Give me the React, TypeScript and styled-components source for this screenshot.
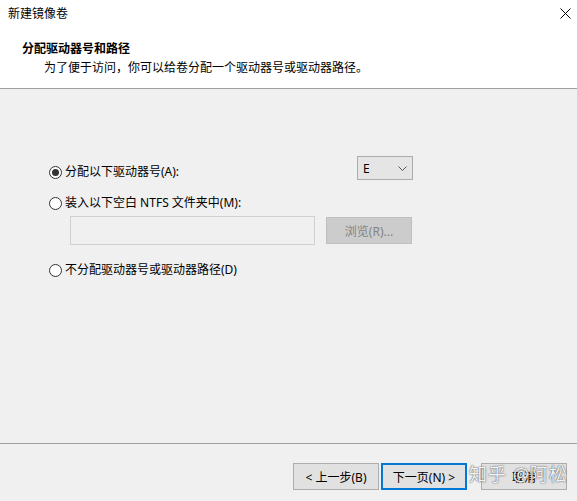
import styled, { createGlobalStyle } from "styled-components";

const GlobalStyle = createGlobalStyle`
  html, body {
    margin: 0;
    padding: 0;
    background: #ffffff;
  }
  body {
    font-family: "Noto Sans", "Noto Sans CJK SC", sans-serif;
    font-size: 12px;
    color: #000;
  }
`;

type DriveOption = { id: string; label: string; checked?: boolean };

const options: DriveOption[] = [
  { id: "letter", label: "分配以下驱动器号(A):", checked: true },
  { id: "folder", label: "装入以下空白 NTFS 文件夹中(M):" },
  { id: "none", label: "不分配驱动器号或驱动器路径(D)" },
];

export default function App() {
  return (
    <>
      <GlobalStyle />
      <Dialog>
        <TitleBar>
          <span>新建镜像卷</span>
          <CloseButton aria-label="关闭">
            <svg width="11" height="11" viewBox="0 0 11 11">
              <path d="M0.5 0.5 L10.5 10.5 M10.5 0.5 L0.5 10.5" stroke="#000" strokeWidth="1" fill="none" />
            </svg>
          </CloseButton>
        </TitleBar>

        <Header>
          <HeaderTitle>分配驱动器号和路径</HeaderTitle>
          <HeaderText>为了便于访问，你可以给卷分配一个驱动器号或驱动器路径。</HeaderText>
        </Header>

        <Body>
          <LetterRow>
            <Radio label={options[0].label} checked={options[0].checked} />
            <Combo>
              <span>E</span>
              <svg width="9" height="5" viewBox="0 0 9 5">
                <path d="M0.5 0.5 L4.5 4.5 L8.5 0.5" stroke="#555" strokeWidth="1" fill="none" />
              </svg>
            </Combo>
          </LetterRow>

          <FolderBlock>
            <Radio label={options[1].label} />
            <PathRow>
              <PathInput disabled />
              <Button disabled>浏览(R)...</Button>
            </PathRow>
          </FolderBlock>

          <NoneRow>
            <Radio label={options[2].label} />
          </NoneRow>
        </Body>

        <Footer>
          <Button>&lt; 上一步(B)</Button>
          <Button $primary>下一页(N) &gt;</Button>
          <CancelButton>取消</CancelButton>
          <Watermark>知乎 @阿松</Watermark>
        </Footer>
      </Dialog>
    </>
  );
}

function Radio({ label, checked }: { label: string; checked?: boolean }) {
  return (
    <RadioLabel>
      <RadioCircle $checked={checked} />
      <span>{label}</span>
    </RadioLabel>
  );
}

const Dialog = styled.div`
  width: 577px;
  height: 501px;
  display: flex;
  flex-direction: column;
  overflow: hidden;
`;

const TitleBar = styled.div`
  height: 27px;
  display: flex;
  align-items: center;
  justify-content: space-between;
  padding: 0 6px 1px 8px;
  background: #fff;
  line-height: 14px;
`;

const CloseButton = styled.div`
  display: flex;
  align-items: center;
  width: 11px;
  height: 11px;
`;

const Header = styled.div`
  background: #fff;
  padding: 13px 0 12px 22px;
  border-bottom: 1px solid #a0a0a0;
`;

const HeaderTitle = styled.div`
  font-weight: 700;
  line-height: 16px;
`;

const HeaderText = styled.div`
  margin-top: 3px;
  padding-left: 22px;
  line-height: 16px;
`;

const Body = styled.div`
  flex: 1;
  background: #f0f0f0;
  padding: 67px 0 0 49px;
  display: flex;
  flex-direction: column;
`;

const LetterRow = styled.div`
  width: 364px;
  display: flex;
  align-items: flex-start;
  justify-content: space-between;
`;

const RadioLabel = styled.label`
  display: flex;
  align-items: center;
  gap: 3px;
  height: 14px;
  line-height: 14px;
  margin-top: 9px;
  white-space: nowrap;
`;

const RadioCircle = styled.span<{ $checked?: boolean }>`
  box-sizing: border-box;
  width: 13px;
  height: 13px;
  border-radius: 50%;
  border: 1px solid #333;
  background: #fff;
  display: flex;
  align-items: center;
  justify-content: center;

  &::after {
    content: "";
    width: 7px;
    height: 7px;
    border-radius: 50%;
    background: #333;
    display: ${({ $checked }) => ($checked ? "block" : "none")};
  }
`;

const Combo = styled.div`
  box-sizing: border-box;
  width: 56px;
  height: 24px;
  display: flex;
  align-items: center;
  justify-content: space-between;
  padding: 0 5px 0 5px;
  background: #e5e5e5;
  border: 1px solid #acacac;
`;

const FolderBlock = styled.div`
  margin-top: 7px;
`;

const PathRow = styled.div`
  display: flex;
  align-items: center;
  gap: 11px;
  margin: 6px 0 0 21px;
`;

const PathInput = styled.input`
  box-sizing: border-box;
  width: 245px;
  height: 29px;
  background: #f0f0f0;
  border: 1px solid #d0d0d0;
  outline: none;
`;

const Button = styled.button<{ $primary?: boolean }>`
  box-sizing: border-box;
  width: 86px;
  height: 27px;
  padding: 0;
  font: inherit;
  color: #000;
  background: #e1e1e1;
  border: ${({ $primary }) => ($primary ? "2px solid #0078d7" : "1px solid #adadad")};

  &:disabled {
    background: #cccccc;
    border-color: #bfbfbf;
    color: #838383;
  }
`;

const CancelButton = styled(Button)`
  margin-left: 12px;
`;

const NoneRow = styled.div`
  margin-top: 9px;
`;

const Footer = styled.div`
  position: relative;
  height: 58px;
  box-sizing: border-box;
  border-top: 1px solid #a0a0a0;
  background: #f0f0f0;
  display: flex;
  justify-content: flex-end;
  align-items: flex-start;
  gap: 2px;
  padding: 19px 10px 0 0;
`;

const Watermark = styled.div`
  position: absolute;
  left: 469px;
  top: 18px;
  font-size: 18px;
  line-height: 24px;
  letter-spacing: 1px;
  color: rgba(255, 255, 255, 0.95);
  text-shadow: 0 0 1px rgba(0, 0, 0, 0.7), 0 0 2px rgba(0, 0, 0, 0.35);
  white-space: nowrap;
  pointer-events: none;
`;
